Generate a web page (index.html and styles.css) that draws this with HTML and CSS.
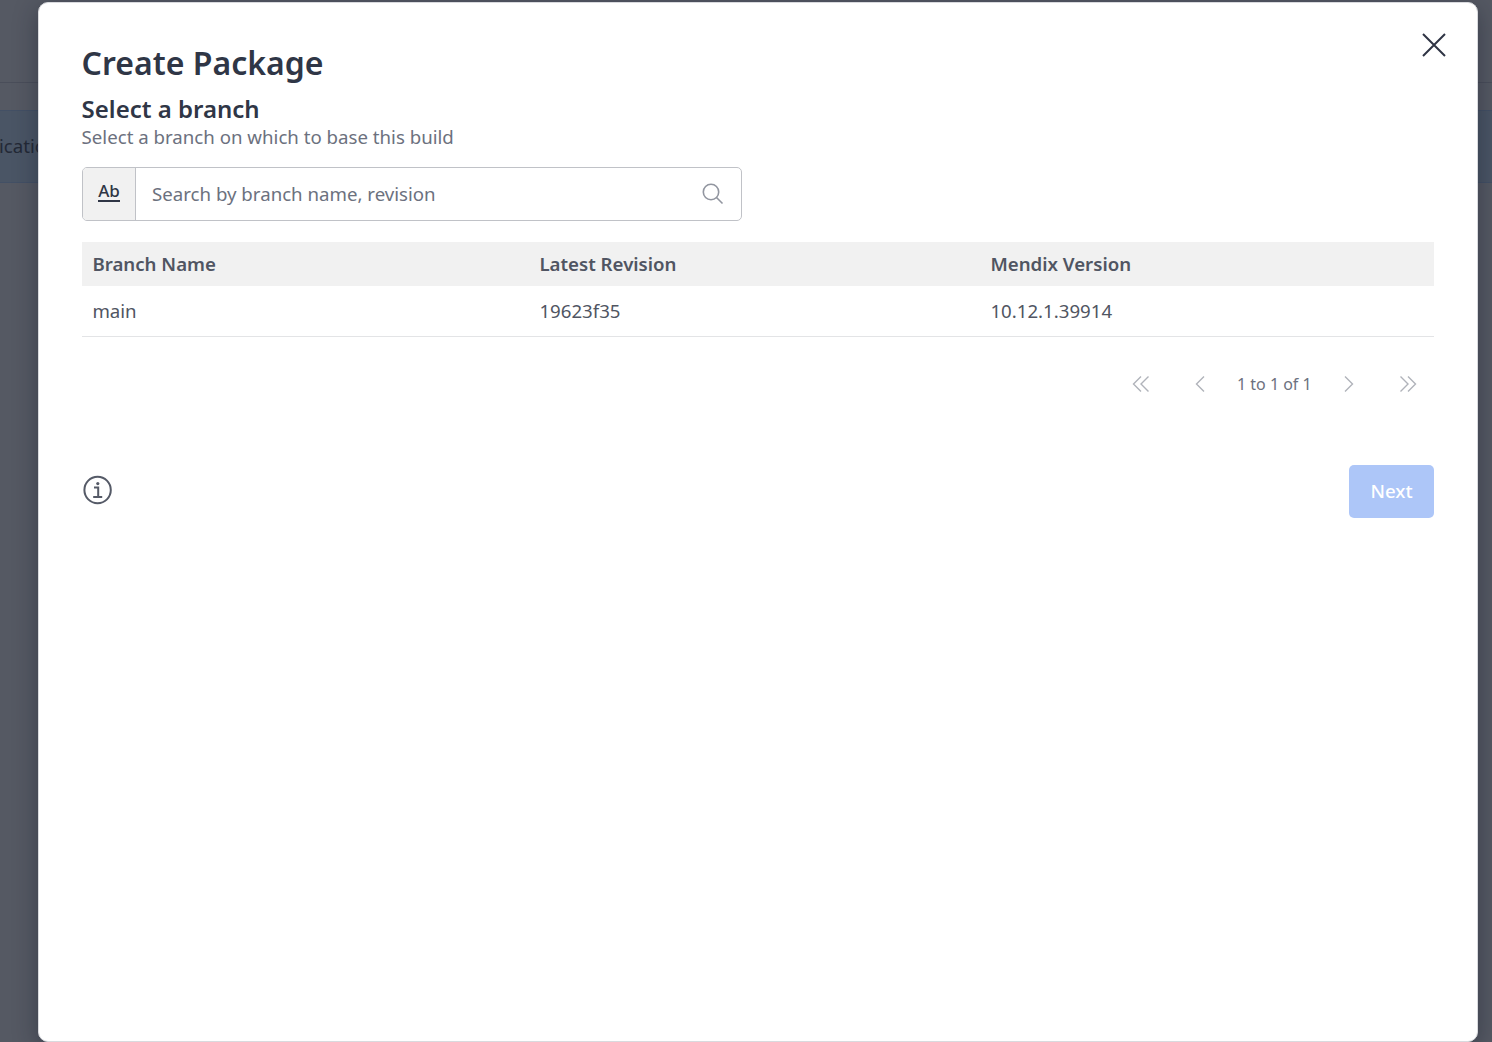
FILE: index.html
```html
<!DOCTYPE html>
<html lang="en">
<head>
<meta charset="utf-8">
<title>Create Package</title>
<link rel="stylesheet" href="styles.css">
</head>
<body>
<div class="page">
  <div class="page-header"></div>
  <div class="page-gap"></div>
  <div class="page-banner">ication</div>
</div>
<div class="overlay">
  <main class="modal">
    <button class="close" aria-label="Close"><svg width="26" height="26" viewBox="0 0 26 26"><path d="M2 2 24 24M24 2 2 24"/></svg></button>
    <h1 class="title">Create Package</h1>
    <h2 class="subtitle">Select a branch</h2>
    <p class="hint">Select a branch on which to base this build</p>
    <div class="search">
      <div class="search-type"><span class="search-ab">Ab</span></div>
      <div class="search-field"><span>Search by branch name, revision</span>
        <svg width="22" height="22" viewBox="0 0 22 22"><circle cx="9" cy="9" r="7.7"/><path d="M14.5 14.5 20.500 20.500"/></svg>
      </div>
    </div>
    <div class="table">
      <div class="row head"><span>Branch Name</span><span>Latest Revision</span><span>Mendix Version</span></div>
      <div class="row"><span>main</span><span>19623f35</span><span>10.12.1.39914</span></div>
    </div>
    <div class="pager">
      <svg width="18" height="18" viewBox="0 0 18 18"><path d="M9 1.500 1.500 9 9 16.500M16.500 1.500 9 9 16.500 16.500"/></svg>
      <svg class="prev" width="10" height="18" viewBox="0 0 10 18"><path d="M9 1.500 1.500 9 9 16.500"/></svg>
      <span class="pager-text">1 to 1 of 1</span>
      <svg width="10" height="18" viewBox="0 0 10 18"><path d="M1 1.500 8.500 9 1 16.500"/></svg>
      <svg class="last" width="18" height="18" viewBox="0 0 18 18"><path d="M1.500 1.500 9 9 1.500 16.500M9 1.500 16.500 9 9 16.500"/></svg>
    </div>
    <div class="footer">
      <svg class="info" width="30" height="30" viewBox="0 0 30 30"><circle cx="14.600" cy="15" r="13.200"/><path d="M11 12.500H15.200V22M10.200 22H19.200"/><circle class="dot" cx="14.800" cy="8.600" r="1.600"/></svg>
      <button class="next">Next</button>
    </div>
  </main>
</div>
</body>
</html>
```
FILE: styles.css
```css
* { box-sizing: border-box; }
body {
  margin: 0;
  height: 1042px;
  overflow: hidden;
  background: #555963;
  color: #505562;
  font: 18.67px/26px "Noto Sans", sans-serif;
}
h1, h2, p { margin: 0; }
button { border: 0; padding: 0; font: inherit; }
svg { fill: none; stroke: currentColor; flex: none; display: block; }
.page { height: 1042px; }
.page-header { height: 83px; border-bottom: 1px solid #4a4e5a; }
.page-gap { height: 27px; }
.page-banner {
  height: 73px;
  border: solid #435065;
  border-width: 1px 0;
  background: #4a5565;
  color: #232936;
  line-height: 69px;
  text-indent: -1px;
}
.overlay { position: absolute; inset: 0; padding: 2px 14px 0 38px; }
.modal {
  position: relative;
  height: 1040px;
  padding: 38px 43px 0;
  background: #fff;
  border: 1px solid #d9dade;
  border-radius: 10px;
  box-shadow: 0 6px 24px rgba(20, 24, 40, .42);
}
.close {
  position: absolute;
  top: 29px;
  right: 30px;
  background: none;
  color: #2f3444;
}
.close svg { stroke-width: 2; }
.title { font-size: 32px; line-height: 44px; font-weight: 600; color: #2f3646; text-indent: -.4px; }
.subtitle { margin-top: 8px; font-size: 24px; line-height: 32px; font-weight: 600; color: #2f3646; text-indent: -.4px; }
.hint { line-height: 24px; color: #6c717e; text-indent: -.4px; }
.search {
  display: flex;
  width: 660px;
  height: 54px;
  margin-top: 18px;
  border: 1px solid #c0c2c7;
  border-radius: 5px;
  overflow: hidden;
}
.search-type {
  width: 53px;
  border-right: 1px solid #c0c2c7;
  background: #f1f1f1;
  display: flex;
  justify-content: center;
  padding-top: 12px;
}
.search-ab {
  height: 22px;
  border-bottom: 2px solid #2f3646;
  color: #2f3646;
  font-size: 17px;
  line-height: 21px;
  font-weight: 500;
}
.search-field {
  flex: 1;
  display: flex;
  align-items: center;
  justify-content: space-between;
  padding: 0 17px 0 16px;
  color: #6c717e;
}
.search-field svg { color: #9296a0; stroke-width: 1.600; }
.table { margin-top: 21px; }
.row {
  display: grid;
  grid-template-columns: 447px 451px 1fr;
  align-items: center;
  height: 51px;
  border-bottom: 1px solid #e3e4e6;
}
.row span { padding-left: 10.4px; }
.head { height: 44px; border: 0; background: #f1f1f1; font-weight: 600; }
.pager {
  display: flex;
  align-items: center;
  justify-content: flex-end;
  height: 40px;
  margin-top: 27px;
  padding-right: 17px;
  color: #b0b3ba;
}
.pager svg { stroke-width: 1.400; }
.prev { margin-left: 45px; }
.pager-text { margin: 0 32.3px 0 32px; font-size: 16px; color: #6c717e; }
.last { margin-left: 45px; }
.footer { display: flex; justify-content: space-between; margin-top: 61px; }
.info { margin: 10px 0 0 1px; stroke-width: 2; color: #555a67; }
.dot { fill: currentColor; stroke: none; }
.next {
  width: 85px;
  height: 53px;
  padding-bottom: 2px;
  border-radius: 5px;
  background: #adc6f8;
  color: #fff;
  font-weight: 500;
}
```
